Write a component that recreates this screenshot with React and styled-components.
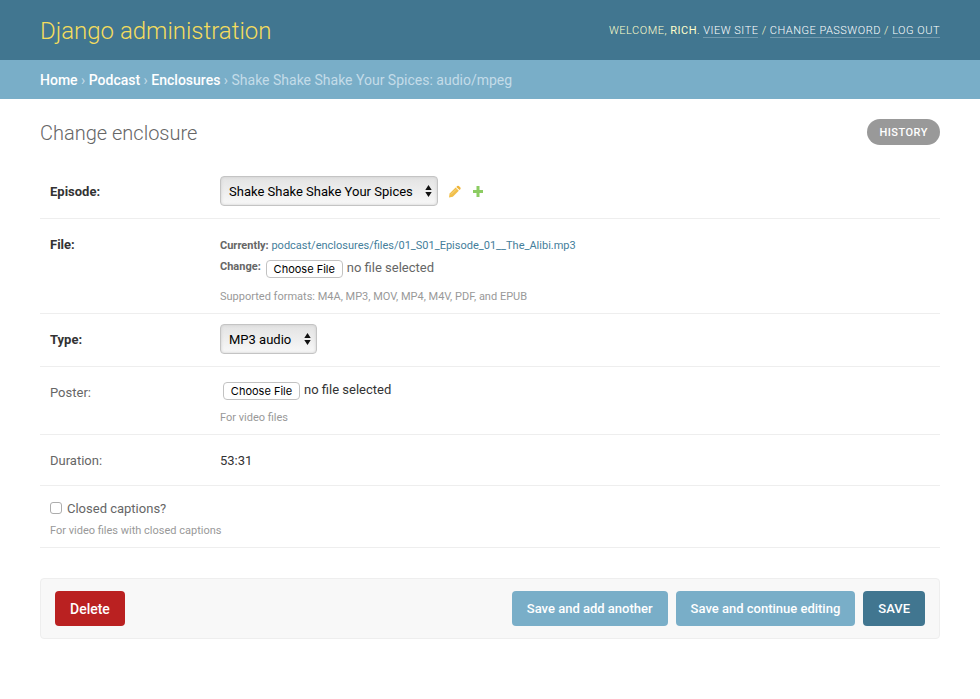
import React from "react";
import styled, { createGlobalStyle } from "styled-components";

const GlobalStyle = createGlobalStyle`
  *, *::before, *::after { box-sizing: border-box; }
  body {
    margin: 0;
    background: #fff;
    color: #333;
    font: 13px/20px Roboto, "Liberation Sans", sans-serif;
  }
  a { color: #447e9b; text-decoration: none; }
`;

const Header = styled.header`
  display: flex;
  align-items: center;
  justify-content: space-between;
  height: 60px;
  padding: 2px 40px 0;
  background: #417690;
  color: #ffc;
`;

const SiteName = styled.h1`
  margin: 0;
  color: #f5dd5d;
  font-size: 24px;
  font-weight: 300;
  line-height: 32px;
`;

const UserTools = styled.nav`
  font-size: 11px;
  font-weight: 300;
  line-height: 16px;
  letter-spacing: 0.5px;
  text-transform: uppercase;
`;

const ToolLink = styled.a`
  border-bottom: 1px solid rgba(255, 255, 255, 0.25);
  color: #fff;
`;

const Breadcrumbs = styled.nav`
  padding: 10px 40px 9px;
  background: #79aec8;
  color: #c4dce8;
  font-size: 14px;
`;

const Crumb = styled.a`
  color: #fff;
  font-weight: 500;
`;

const Main = styled.main`
  padding: 20px 40px 60px;
`;

const TitleBar = styled.div`
  display: flex;
  align-items: center;
  justify-content: space-between;
  margin-bottom: 21px;
`;

const Title = styled.h2`
  margin: 0;
  padding-top: 2px;
  color: #666;
  font-size: 20px;
  font-weight: 300;
  line-height: 24px;
`;

const HistoryLink = styled.a`
  padding: 6px 12px 4px;
  border-radius: 15px;
  background: #999;
  color: #fff;
  font-size: 11px;
  font-weight: 500;
  line-height: 16px;
  letter-spacing: 0.5px;
  text-transform: uppercase;
`;

const Row = styled.div`
  display: flex;
  padding: 10px;
  border-bottom: 1px solid #eee;
`;

const Label = styled.label`
  flex: 0 0 170px;
  padding-top: 2px;
  color: ${(p) => (p.$required ? "#333" : "#666")};
  font-weight: ${(p) => (p.$required ? 700 : 400)};
  line-height: 28px;
`;

const Field = styled.div`
  flex: 1;
  min-width: 0;
`;

const SelectLine = styled.div`
  display: flex;
  align-items: center;
  padding-bottom: 2px;
`;

const SelectBox = styled.span`
  position: relative;
  display: flex;
`;

const Select = styled.select`
  appearance: none;
  height: 30px;
  margin: 0;
  padding: 0 24px 0 8px;
  border: 1px solid #c4c4c4;
  border-radius: 4px;
  background: linear-gradient(#e3e3e3, #f8f8f8);
  box-shadow: inset 0 0 3px #ccc;
  color: #000;
  font: 400 13px Roboto, "Liberation Sans", sans-serif;
`;

const Arrows = styled.svg`
  position: absolute;
  top: 9px;
  right: 6px;
  pointer-events: none;
`;

const IconLink = styled.a`
  display: flex;
  margin-left: 10px;
`;

const Current = styled.p`
  margin: 0;
  padding-top: 7px;
  color: #666;
  font-size: 11px;
  line-height: 19px;
`;

const FileLine = styled.div`
  display: flex;
  align-items: center;
  height: ${(p) => (p.$muted ? "27px" : "26px")};
  padding-bottom: ${(p) => (p.$muted ? "1px" : "0")};
  color: ${(p) => (p.$muted ? "#666" : "#333")};
`;

const ChangeLabel = styled.label`
  margin-right: 2px;
  padding-bottom: 2px;
  font-size: 11px;
  font-weight: 700;
`;

const FileInput = styled.input`
  width: 77px;
  height: 18px;
  margin: 2px 4px 0 3px;
  overflow: hidden;
  font-size: 11px;
  line-height: 16px;

  &::file-selector-button {
    width: 77px;
    height: 18px;
    margin: 0;
    padding: 0;
    border: 1px solid #c2c2c2;
    border-radius: 4px;
    background: #fff;
    color: #000;
    font: 400 11px/16px Inter, "Liberation Sans", sans-serif;
  }
`;

const FileStatus = styled.span``;

const Help = styled.p`
  margin: ${(p) => (p.$tight ? "5px" : "9px")} 0 0;
  color: #999;
  font-size: 11px;
  line-height: 12px;
`;

const Value = styled.div`
  padding-top: 2px;
  color: #333;
  line-height: 28px;
`;

const CheckLine = styled.div`
  display: flex;
  align-items: center;
  height: 24px;
`;

const Checkbox = styled.input`
  appearance: none;
  width: 12px;
  height: 12px;
  margin: 0 5px 0 0;
  border: 1px solid #adadad;
  border-radius: 3px;
  background: #fff;

  &:checked { background: #417690; }
`;

const CheckLabel = styled.label`
  padding-top: 2px;
  color: #666;
`;

const SubmitRow = styled.div`
  display: flex;
  gap: 8px;
  margin-top: 30px;
  padding: 12px 14px;
  border: 1px solid #eee;
  border-radius: 4px;
  background: #f8f8f8;
`;

const buttonColors = { danger: "#ba2121", soft: "#79aec8", primary: "#417690" };

const Button = styled.button`
  height: 35px;
  margin: 0;
  padding: 0 15px;
  border: 0;
  border-radius: 4px;
  background: ${(p) => buttonColors[p.$kind]};
  color: #fff;
  font: ${(p) => (p.$kind === "danger" ? "500 14px" : "500 13px")} Roboto, "Liberation Sans", sans-serif;
`;

const DeleteButton = styled(Button)`
  margin-right: auto;
`;

function SelectField({ id, options }) {
  return (
    <SelectBox>
      <Select id={id}>
        {options.map((o) => <option key={o}>{o}</option>)}
      </Select>
      <Arrows width="7" height="12" viewBox="0 0 7 12" aria-hidden="true">
        <path d="M3.5 0 6.7 5H.3zM3.5 12 .3 7h6.4z" fill="#111" />
      </Arrows>
    </SelectBox>
  );
}

export default function App() {
  return (
    <>
      <GlobalStyle />
      <Header>
        <SiteName>Django administration</SiteName>
        <UserTools>
          Welcome, <strong>Rich</strong>. <ToolLink href="#site">View site</ToolLink> /{" "}
          <ToolLink href="#password">Change password</ToolLink> /{" "}
          <ToolLink href="#logout">Log out</ToolLink>
        </UserTools>
      </Header>
      <Breadcrumbs>
        <Crumb href="#home">Home</Crumb> › <Crumb href="#podcast">Podcast</Crumb> ›{" "}
        <Crumb href="#enclosures">Enclosures</Crumb> › Shake Shake Shake Your Spices: audio/mpeg
      </Breadcrumbs>
      <Main>
        <TitleBar>
          <Title>Change enclosure</Title>
          <HistoryLink href="#history">History</HistoryLink>
        </TitleBar>
        <form onSubmit={(e) => e.preventDefault()}>
          <Row>
            <Label $required htmlFor="episode">Episode:</Label>
            <Field>
              <SelectLine>
                <SelectField id="episode" options={["Shake Shake Shake Your Spices"]} />
                <IconLink href="#edit" aria-label="Change episode">
                  <svg width="13" height="13" viewBox="0 0 13 13">
                    <path d="M1 12.4 1.6 8.6 7.6 2.6 10.8 5.8 4.8 11.8z" fill="#f1bf4a" />
                    <path d="M8.3 1.9 9.2 1Q10 .4 10.9 1L12.4 2.5Q13 3.4 12.4 4.2L11.5 5.1z" fill="#efb53a" />
                    <path d="M3 9.4 8 4.4" stroke="#f8dc9a" strokeWidth=".7" />
                  </svg>
                </IconLink>
                <IconLink href="#add" aria-label="Add episode">
                  <svg width="13" height="13" viewBox="0 0 13 13">
                    <path d="M5.5 1h3v4H12v3H8.500v4h-3V8H2V5h3.500z" fill="#8ccc62" />
                  </svg>
                </IconLink>
              </SelectLine>
            </Field>
          </Row>
          <Row>
            <Label $required htmlFor="file">File:</Label>
            <Field>
              <Current>
                <strong>Currently:</strong>{" "}
                <a href="#file">podcast/enclosures/files/01_S01_Episode_01__The_Alibi.mp3</a>
              </Current>
              <FileLine $muted>
                <ChangeLabel htmlFor="file">Change:</ChangeLabel>
                <FileInput id="file" type="file" />
                <FileStatus>no file selected</FileStatus>
              </FileLine>
              <Help>Supported formats: M4A, MP3, MOV, MP4, M4V, PDF, and EPUB</Help>
            </Field>
          </Row>
          <Row>
            <Label $required htmlFor="type">Type:</Label>
            <Field>
              <SelectLine>
                <SelectField id="type" options={["MP3 audio"]} />
              </SelectLine>
            </Field>
          </Row>
          <Row>
            <Label htmlFor="poster">Poster:</Label>
            <Field>
              <FileLine>
                <FileInput id="poster" type="file" />
                <FileStatus>no file selected</FileStatus>
              </FileLine>
              <Help>For video files</Help>
            </Field>
          </Row>
          <Row>
            <Label as="div">Duration:</Label>
            <Value>53:31</Value>
          </Row>
          <Row>
            <Field>
              <CheckLine>
                <Checkbox id="captions" type="checkbox" />
                <CheckLabel htmlFor="captions">Closed captions?</CheckLabel>
              </CheckLine>
              <Help $tight>For video files with closed captions</Help>
            </Field>
          </Row>
          <SubmitRow>
            <DeleteButton type="button" $kind="danger">Delete</DeleteButton>
            <Button type="submit" $kind="soft">Save and add another</Button>
            <Button type="submit" $kind="soft">Save and continue editing</Button>
            <Button type="submit" $kind="primary">SAVE</Button>
          </SubmitRow>
        </form>
      </Main>
    </>
  );
}
